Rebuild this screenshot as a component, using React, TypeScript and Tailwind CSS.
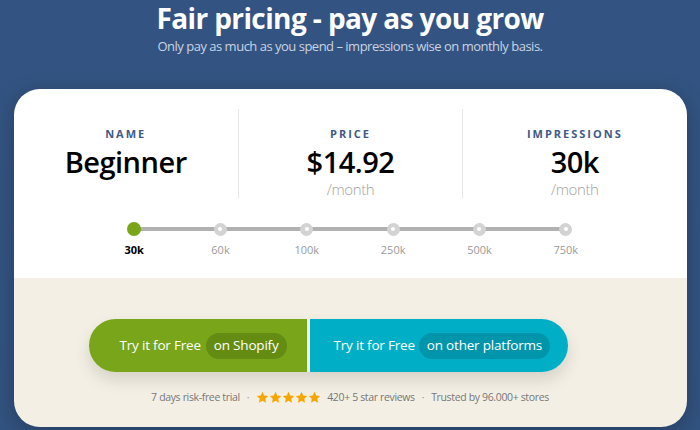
import { Fragment } from "react";

const steps = ["30k", "60k", "100k", "250k", "500k", "750k"];

const stats = [
  { label: "NAME", value: "Beginner", sub: "" },
  { label: "PRICE", value: "$14.92", sub: "/month" },
  { label: "IMPRESSIONS", value: "30k", sub: "/month" },
];

function Star() {
  return (
    <svg width="13" height="13" viewBox="0 0 24 24" className="fill-[#f7a600]">
      <path d="M12 1.5l3.2 6.8 7.3.9-5.4 5 1.4 7.3L12 17.9l-6.5 3.6 1.4-7.3-5.4-5 7.3-.9z" />
    </svg>
  );
}

export default function App() {
  return (
    <div
      className="w-[700px] h-[430px] overflow-hidden bg-gradient-to-b from-[#335482] to-[#32527f] flex flex-col items-center"
      style={{ fontFamily: '"Open Sans", "Liberation Sans", sans-serif' }}
    >
      <h1 className="mt-[1px] text-[28px] leading-[34px] font-bold text-white tracking-[-0.6px]">
        Fair pricing - pay as you grow
      </h1>
      <p className="mt-[2px] text-[13px] leading-[18px] text-[#c9d3e2] tracking-[-0.5px]">
        Only pay as much as you spend – impressions wise on monthly basis.
      </p>

      <div className="mt-[34px] w-[673px] rounded-[26px] overflow-hidden shadow-[0_4px_20px_rgba(0,0,0,0.25)]">
        {/* top: plan details + slider */}
        <div className="bg-white h-[189px] pt-[20px]">
          <div className="grid grid-cols-3">
            {stats.map((s, i) => (
              <div
                key={s.label}
                className={`h-[89px] flex flex-col items-center ${i > 0 ? "border-l border-[#e6e6e6]" : ""}`}
              >
                <div className="mt-[18px] text-[11px] leading-[14px] font-bold tracking-[2px] text-[#3d5b88]">
                  {s.label}
                </div>
                <div className="mt-[5px] text-[29px] leading-[32px] font-semibold text-black tracking-[-0.5px]">
                  {s.value}
                </div>
                {s.sub && (
                  <div className="mt-[2px] text-[15px] leading-[18px] font-light text-[#a3a3a3] tracking-[-0.4px]">
                    {s.sub}
                  </div>
                )}
              </div>
            ))}
          </div>

          <div className="mt-[24px] mx-auto w-[518px] relative">
            <div className="absolute left-[43px] right-[43px] top-[5px] h-[4px] bg-[#b1b1b1]" />
            <div className="relative grid grid-cols-6">
              {steps.map((st, i) => (
                <div key={st} className="flex flex-col items-center">
                  {i === 0 ? (
                    <div className="w-[14px] h-[14px] rounded-full bg-[#78a51a]" />
                  ) : (
                    <div className="w-[13px] h-[13px] rounded-full bg-[#d3d3d3] flex items-center justify-center mt-[0.5px]">
                      <div className="w-[4px] h-[4px] rounded-full bg-white" />
                    </div>
                  )}
                  <div
                    className={`mt-[7px] text-[11px] leading-[14px] ${i === 0 ? "font-bold text-black" : "text-[#9a9a9a]"}`}
                  >
                    {st}
                  </div>
                </div>
              ))}
            </div>
          </div>
        </div>

        {/* bottom: call to action */}
        <div className="bg-[#f3efe4] h-[149px] flex flex-col items-center">
          <div className="mt-[41px] ml-[-44px] flex gap-[3px] shadow-[0_8px_16px_rgba(0,0,0,0.12)] rounded-full">
            <button className="w-[218px] h-[53px] rounded-l-full bg-[#78a51a] flex items-center justify-end pr-[20px] text-white text-[13.5px] tracking-[-0.2px]">
              <span>Try it for Free</span>
              <span className="ml-[5px] px-[8px] h-[26px] flex items-center rounded-full bg-[#648c13]">
                on Shopify
              </span>
            </button>
            <button className="w-[258px] h-[53px] rounded-r-full bg-[#00aec6] flex items-center pl-[24px] text-white text-[13.5px] tracking-[-0.2px]">
              <span>Try it for Free</span>
              <span className="ml-[4px] px-[8px] h-[26px] flex items-center rounded-full bg-[#0095ab]">
                on other platforms
              </span>
            </button>
          </div>

          <div className="mt-[18px] flex items-center text-[10.5px] leading-[14px] text-[#777] tracking-[-0.35px]">
            {["7 days risk-free trial", "stars", "Trusted by 96.000+ stores"].map((t, i) => (
              <Fragment key={t}>
                {i > 0 && <span className="mx-[7px] text-[#999]">·</span>}
                {t === "stars" ? (
                  <span className="flex items-center">
                    <span className="flex">
                      <Star />
                      <Star />
                      <Star />
                      <Star />
                      <Star />
                    </span>
                    <span className="ml-[6px]">420+ 5 star reviews</span>
                  </span>
                ) : (
                  <span>{t}</span>
                )}
              </Fragment>
            ))}
          </div>
        </div>
      </div>
    </div>
  );
}
